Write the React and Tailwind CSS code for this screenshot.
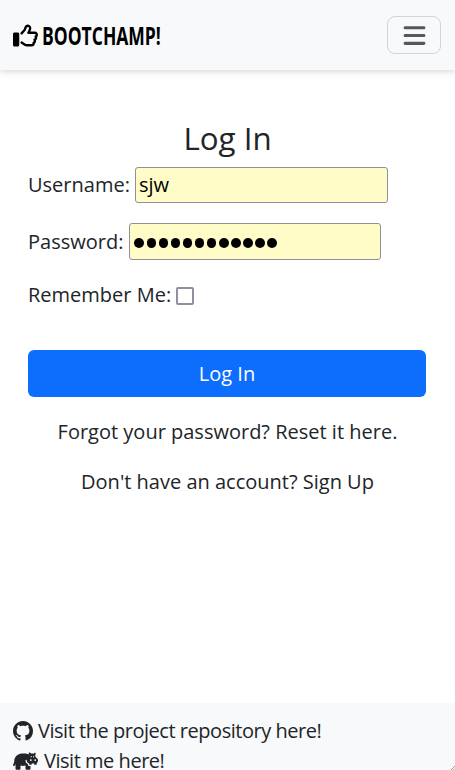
import { FaRegThumbsUp, FaBars, FaHippo } from 'react-icons/fa6';
import { BsGithub } from 'react-icons/bs';

export default function App() {
  return (
    <div className="flex h-[770px] w-full flex-col overflow-hidden bg-white font-['Open_Sans',sans-serif] text-[20px] leading-[30px] text-[#212529]">
      <header className="flex h-[70px] shrink-0 items-center justify-between bg-[#f8f9fa] pr-3.5 pl-[13px] shadow-[0_2px_4px_rgba(0,0,0,0.075),0_4px_8px_rgba(0,0,0,0.06)]">
        <a href="#" className="flex items-center text-black">
          <FaRegThumbsUp className="size-[25px]" />
          <span className="ml-1 block w-[120px] origin-left scale-x-[0.7] text-[25px] leading-[30px] font-bold whitespace-nowrap">BOOTCHAMP!</span>
        </a>
        <button aria-label="Menu" className="flex h-[38px] w-[54px] items-center justify-center rounded-lg border border-[#d3d4d5] text-[#575859]">
          <FaBars className="size-[25px]" />
        </button>
      </header>

      <main className="flex grow flex-col px-7 pt-[49px]">
        <h1 className="text-center text-[31.3px] leading-[38px] font-normal">Log In</h1>
        <form className="flex flex-col">
          <label className="mt-[10px] flex h-9 items-center">
            Username:
            <input type="text" defaultValue="sjw" className="ml-[5px] h-9 w-[253px] rounded-[3px] border border-[#8f8f9d] bg-[#fffcc8] px-[3px] pb-0.5 text-black" />
          </label>
          <label className="mt-5 flex h-[37px] items-center">
            Password:
            <span className="ml-[6px] flex h-[37px] w-[252px] items-center gap-[2.6px] rounded-[3px] border border-[#8f8f9d] bg-[#fffcc8] pt-[3px] pl-[4px]">
              {Array.from({ length: 12 }, (_, i) => (
                <i key={i} className="size-[9.5px] rounded-full bg-black" />
              ))}
            </span>
          </label>
          <label className="mt-5 flex h-[30px] items-center">
            Remember Me:
            <input type="checkbox" className="mt-0.5 ml-[5px] size-[18px] appearance-none rounded-[2px] border-2 border-[#8f8f9d] bg-white" />
          </label>
          <button type="button" className="mt-10 mr-px h-[47px] rounded-md bg-[#0d6efd] text-white">Log In</button>
        </form>
        <p className="mt-5 text-center">Forgot your password? Reset it here.</p>
        <p className="mt-5 text-center">Don't have an account? Sign Up</p>
      </main>

      <footer className="relative h-[67px] shrink-0 bg-[#f8f9fa] pt-[13px] pl-[13px] tracking-[-0.47px]">
        <a href="#" className="flex h-[30px] items-center whitespace-nowrap">
          <BsGithub className="mr-[5px] mb-px size-5" />
          Visit the project repository here!
        </a>
        <a href="#" className="flex h-[30px] items-center whitespace-nowrap">
          <FaHippo className="mr-[6px] mb-px h-5 w-[25px]" />
          Visit me here!
        </a>
        <svg className="absolute right-0 bottom-0 size-1" viewBox="0 0 4 4" stroke="#999" fill="none">
          <path d="M0 4L4 0M2.5 4L4 2.5" />
        </svg>
      </footer>
    </div>
  );
}
